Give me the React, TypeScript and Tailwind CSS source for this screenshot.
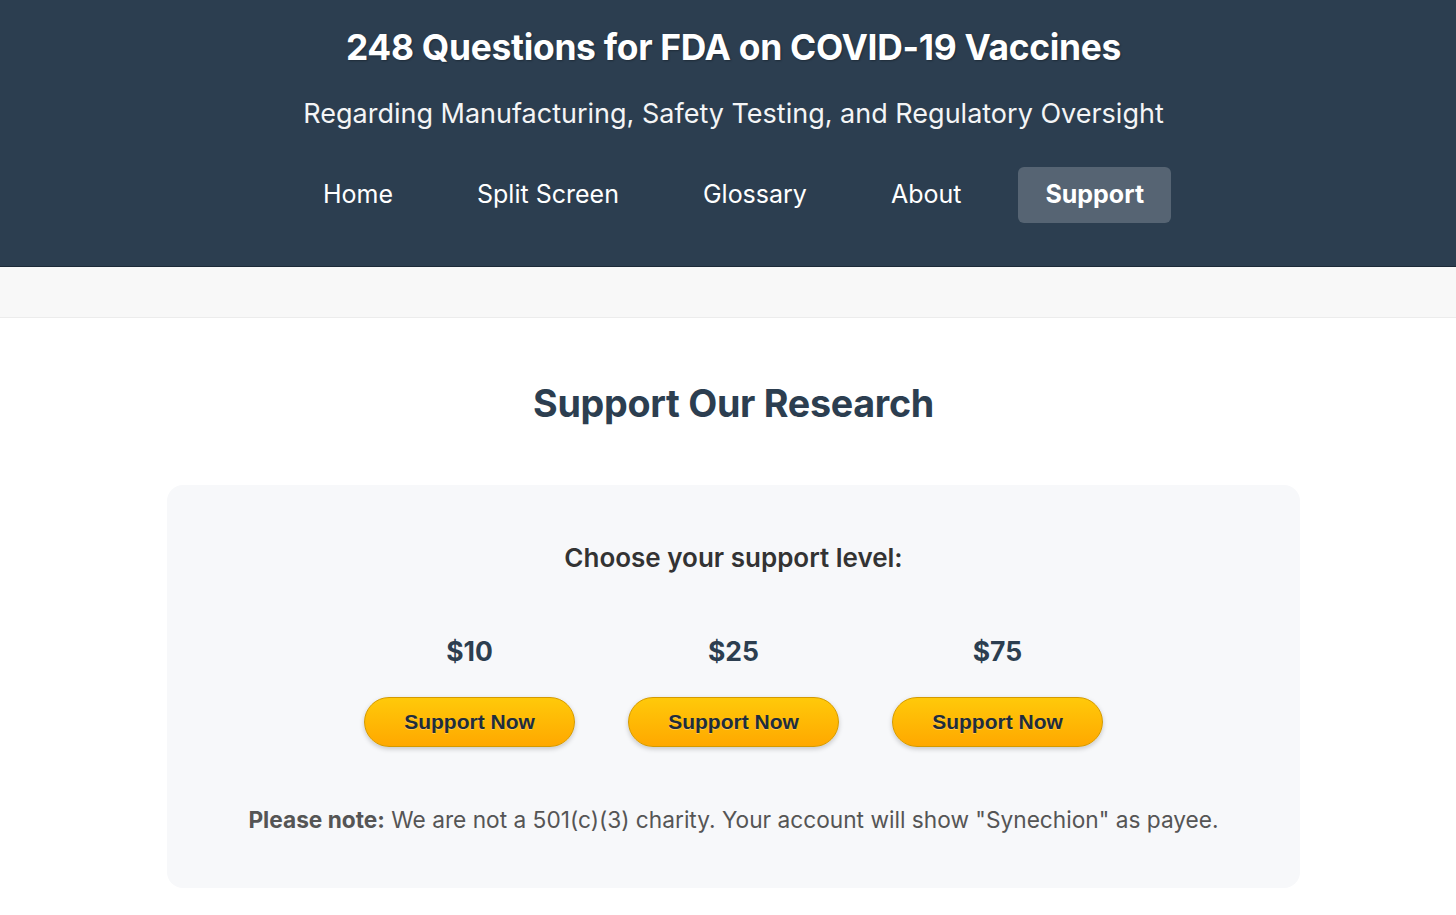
const navItems = ["Home", "Split Screen", "Glossary", "About", "Support"];
const levels = ["$10", "$25", "$75"];

export default function App() {
  return (
    <div className="min-h-screen bg-white font-['Inter',sans-serif]">
      {/* Header */}
      <header className="bg-[#2c3e50] border-b border-[#1c2a38] h-[267px] pl-[11px] flex flex-col items-center text-white">
        <h1 className="mt-[27px] text-[35.4px] leading-[42px] font-bold tracking-[-0.3px] [text-shadow:1px_1px_2px_rgba(0,0,0,0.3)]">
          248 Questions for FDA on COVID-19 Vaccines
        </h1>
        <p className="mt-[28px] text-[27px] leading-[34px] font-normal opacity-95">
          Regarding Manufacturing, Safety Testing, and Regulatory Oversight
        </p>
        <nav className="mt-[36px] flex gap-[30px]">
          {navItems.map((item) => (
            <a
              key={item}
              className={
                "h-[56px] px-[27px] flex items-center rounded-[6px] text-[25px] " +
                (item === "Support" ? "bg-white/20 font-bold" : "font-normal")
              }
            >
              {item}
            </a>
          ))}
        </nav>
      </header>

      {/* Breadcrumb band */}
      <div className="h-[51px] bg-[#f8f8f8] border-b border-[#ececec]" />

      <main className="pl-[11px] flex flex-col items-center">
        <h2 className="mt-[60px] text-[37.7px] leading-[50px] font-bold text-[#2c3e50] tracking-[-0.3px]">
          Support Our Research
        </h2>

        <section className="mt-[57px] w-[1133px] h-[403px] bg-[#f7f8fa] rounded-[16px] flex flex-col items-center">
          <h3 className="mt-[57px] text-[26px] leading-[32px] font-semibold text-[#333]">
            Choose your support level:
          </h3>

          <div className="mt-[61px] flex gap-[53px]">
            {levels.map((amt) => (
              <div key={amt} className="w-[211px] flex flex-col items-center">
                <div className="text-[26.5px] leading-[32px] font-bold text-[#2c3e50]">{amt}</div>
                <button className="mt-[30px] w-[211px] h-[50px] rounded-full border border-[#d49a00] bg-gradient-to-b from-[#ffc90a] to-[#ffa800] shadow-[0_2px_5px_rgba(0,0,0,0.2)] text-[21px] font-bold text-[#1f2d3d] font-['Liberation_Sans',sans-serif] [text-shadow:0_1px_0_rgba(255,255,255,0.3)]">
                  Support Now
                </button>
              </div>
            ))}
          </div>

          <p className="mt-[58px] text-[22.7px] leading-[30px] text-[#555]">
            <strong className="font-bold">Please note:</strong> We are not a 501(c)(3) charity. Your account will show "Synechion" as payee.
          </p>
        </section>
      </main>
    </div>
  );
}
